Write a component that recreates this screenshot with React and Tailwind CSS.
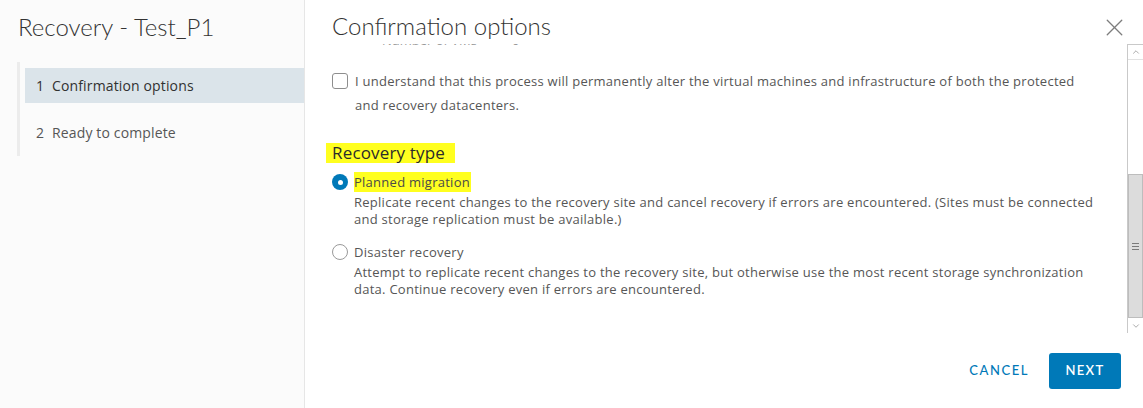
import { X, ChevronUp, ChevronDown } from 'lucide-react'

const BODY = { fontFamily: '"Open Sans", "Noto Sans", sans-serif' }
const HEAD = { fontFamily: 'Lato, "Noto Sans", sans-serif' }

function NavItem({ num, label, active }) {
  return (
    <div
      className={`h-[35px] flex items-center pl-[11px] text-[14px] tracking-[0.01em] ${
        active ? 'bg-[#dbe4ea] text-[#313131]' : 'text-[#565656]'
      }`}
    >
      <span className="w-[16px]">{num}</span>
      <span>{label}</span>
    </div>
  )
}

function Radio({ checked }) {
  if (checked) {
    return (
      <span className="w-[16px] h-[16px] rounded-full bg-[#0079b8] flex items-center justify-center shrink-0">
        <span className="block w-[5px] h-[5px] rounded-full bg-white" />
      </span>
    )
  }
  return <span className="block w-[16px] h-[16px] rounded-full border border-[#9a9a9a] bg-white shrink-0" />
}

function Option({ checked, label, desc, highlight }) {
  return (
    <div className="flex gap-[6px]">
      <div className="pt-[1px] shrink-0">
        <Radio checked={checked} />
      </div>
      <div className="text-[13px] tracking-[0.02em]">
        <div className="h-[18px] leading-[18px]">
          <span className={highlight ? 'bg-[#ffff1f] text-[#4a4a4a] pr-[1px] py-[1px]' : 'text-[#565656]'}>{label}</span>
        </div>
        <p className="mt-[3px] text-[#565656] leading-[17px]">{desc}</p>
      </div>
    </div>
  )
}

function Scrollbar() {
  return (
    <div className="w-[16px] shrink-0 border-l border-t border-[#c9c9c9] bg-[#f7f7f7] flex flex-col">
      <div className="h-[15px] flex items-center justify-center border-b border-[#e2e2e2] bg-white">
        <ChevronUp size={10} strokeWidth={1.5} color="#7a7a7a" />
      </div>
      <div className="h-[114px] bg-white" />
      <div className="flex-1 bg-[#dcdcdc] border border-[#bdbdbd] flex items-center justify-center">
        <div className="flex flex-col gap-[2px]">
          <span className="block w-[7px] h-[1px] bg-[#7a7a7a]" />
          <span className="block w-[7px] h-[1px] bg-[#7a7a7a]" />
          <span className="block w-[7px] h-[1px] bg-[#7a7a7a]" />
        </div>
      </div>
      <div className="h-[15px] flex items-center justify-center bg-white">
        <ChevronDown size={10} strokeWidth={1.5} color="#7a7a7a" />
      </div>
    </div>
  )
}

export default function App() {
  return (
    <div className="w-[1143px] h-[408px] flex bg-white overflow-hidden" style={BODY}>
      {/* wizard steps */}
      <aside className="w-[305px] shrink-0 bg-[#fbfbfb] border-r border-[#e6e6e6]">
        <h1 className="pl-[18px] pt-[11px] text-[24px] leading-[32px] text-[#333] font-light" style={HEAD}>
          Recovery - Test_P1
        </h1>
        <nav className="ml-[17px] mt-[19px] border-l-[3px] border-[#ececec] pt-[6px] pb-[6px] flex flex-col gap-[12px]">
          <div className="pl-[5px]">
            <NavItem num="1" label="Confirmation options" active />
          </div>
          <div className="pl-[5px]">
            <NavItem num="2" label="Ready to complete" />
          </div>
        </nav>
      </aside>

      {/* content */}
      <main className="flex-1 flex flex-col min-w-0">
        <header className="h-[44px] shrink-0 flex items-start justify-between pl-[27px] pr-[14px]">
          <h2 className="pt-[10px] text-[24px] leading-[32px] text-[#333] font-light" style={HEAD}>
            Confirmation options
          </h2>
          <button className="mt-[13px]">
            <X size={29} strokeWidth={1.1} color="#7d7d7d" />
          </button>
        </header>

        <div className="h-[289px] shrink-0 flex">
          <div className="flex-1 overflow-hidden pl-[27px] pr-[20px]">
            {/* previous row, scrolled mostly out of view */}
            <div className="-mt-[12px] h-[17px] flex text-[13px] text-[#9a9a9a] leading-[17px]">
              <span className="ml-[50px] w-[130px]">Number of VMs</span>
              <span>0</span>
            </div>
            <label className="mt-[20px] flex gap-[7px] text-[13px] tracking-[0.02em] text-[#565656] leading-[24px]">
              <span className="block mt-[4px] w-[16px] h-[16px] rounded-[3px] border border-[#8e8e8e] bg-white shrink-0" />
              <span className="pr-[20px]">
                I understand that this process will permanently alter the virtual machines and infrastructure of both the protected and recovery datacenters.
              </span>
            </label>

            <div className="mt-[26px] -ml-[6px] h-[20px] flex">
              <span className="bg-[#ffff1f] pl-[6px] pr-[10px] text-[17px] tracking-[0.01em] leading-[20px] text-[#2b2b2b]">
                Recovery type
              </span>
            </div>

            <div className="mt-[10px] flex flex-col gap-[15px]">
              <Option
                checked
                highlight
                label="Planned migration"
                desc="Replicate recent changes to the recovery site and cancel recovery if errors are encountered. (Sites must be connected and storage replication must be available.)"
              />
              <Option
                label="Disaster recovery"
                desc="Attempt to replicate recent changes to the recovery site, but otherwise use the most recent storage synchronization data. Continue recovery even if errors are encountered."
              />
            </div>
          </div>
          <Scrollbar />
        </div>

        <footer className="flex-1 flex items-center justify-end gap-[20px] pr-[22px] pt-[1px]" style={HEAD}>
          <button className="text-[13px] tracking-[0.12em] text-[#0079b8] font-medium">CANCEL</button>
          <button className="w-[72px] h-[36px] rounded-[3px] bg-[#0079b8] text-white text-[13px] tracking-[0.1em] font-semibold">
            NEXT
          </button>
        </footer>
      </main>
    </div>
  )
}
